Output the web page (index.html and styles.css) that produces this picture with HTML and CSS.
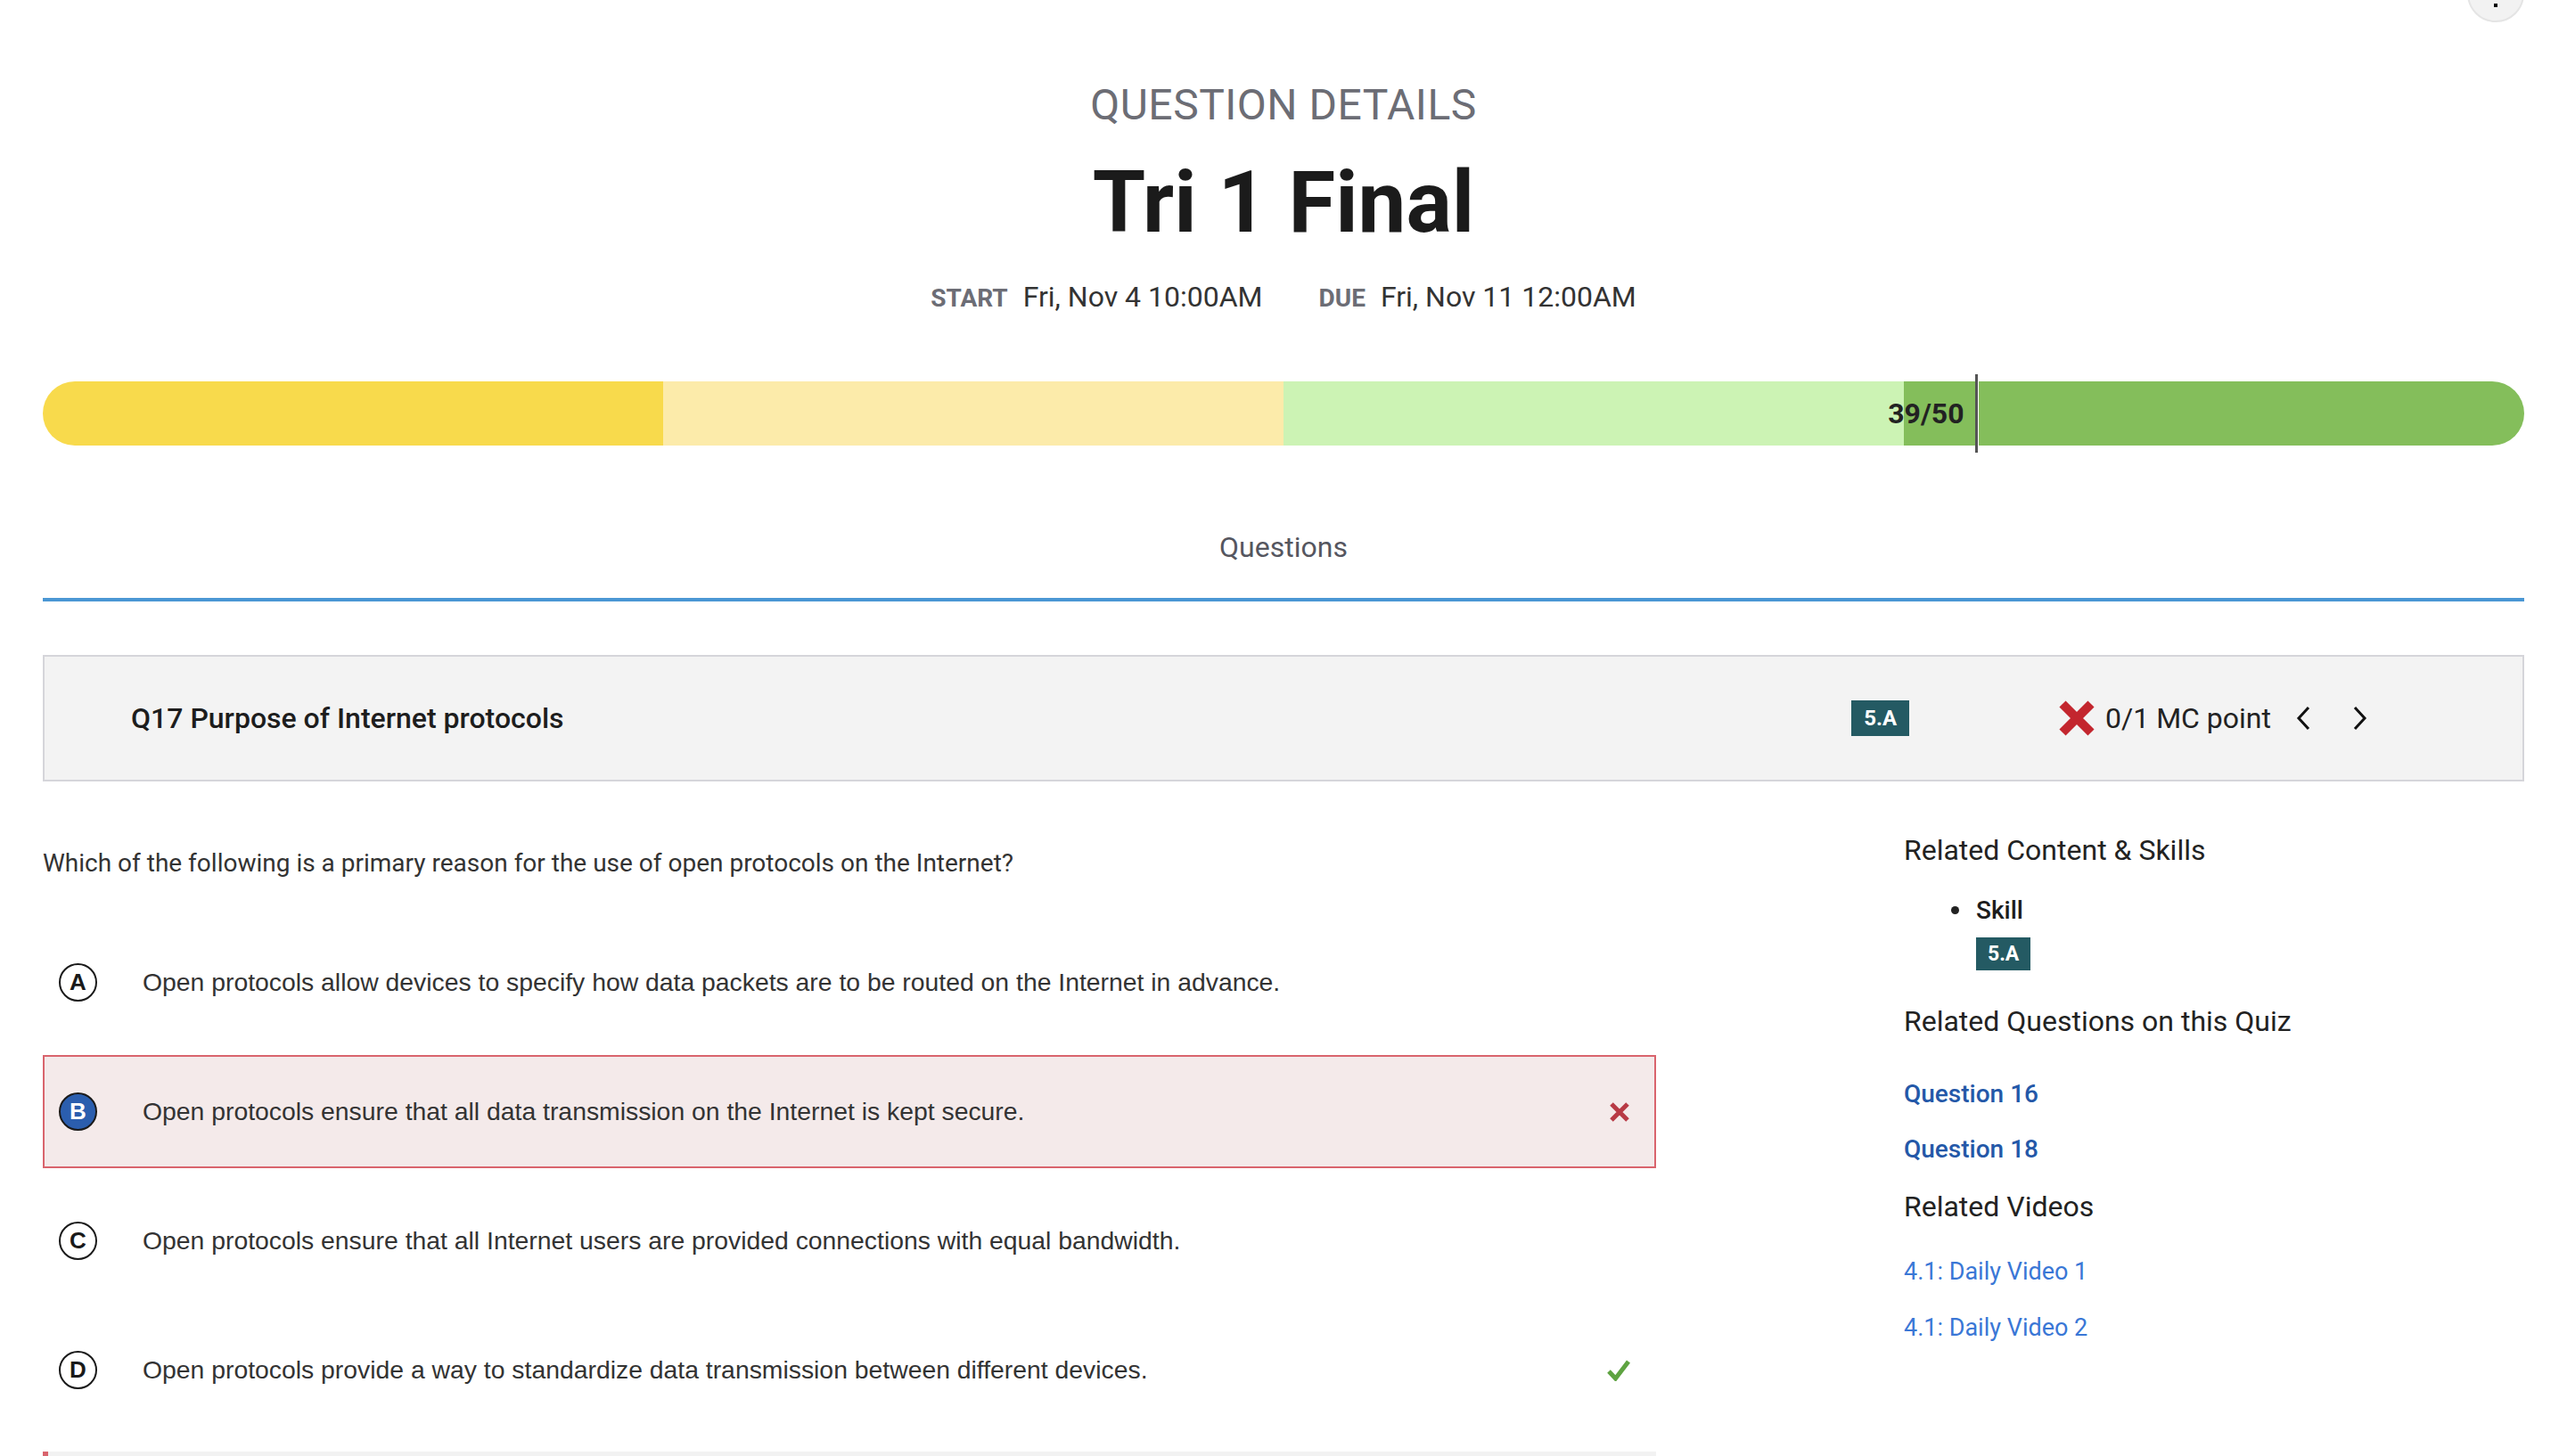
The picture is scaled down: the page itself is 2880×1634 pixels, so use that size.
FILE: index.html
```html
<!DOCTYPE html>
<html lang="en">
<head>
<meta charset="utf-8">
<title>Question Details - Tri 1 Final</title>
<link rel="stylesheet" href="styles.css">
</head>
<body>
<div class="page">
  <button class="menu-btn" aria-label="More options">
    <span class="dot"></span><span class="dot"></span><span class="dot"></span>
  </button>

  <header class="hero">
    <h2 class="eyebrow">QUESTION DETAILS</h2>
    <h1 class="title">Tri 1 Final</h1>
    <div class="dates">
      <div class="date"><span class="date-label">START</span><span class="date-value">Fri, Nov 4 10:00AM</span></div>
      <div class="date"><span class="date-label">DUE</span><span class="date-value">Fri, Nov 11 12:00AM</span></div>
    </div>
  </header>

  <div class="progress">
    <div class="track">
      <div class="seg seg-1"></div>
      <div class="seg seg-2"></div>
      <div class="seg seg-3"></div>
      <div class="seg seg-4"></div>
    </div>
    <div class="marker" style="left:78%"><span class="marker-label">39/50</span></div>
  </div>

  <nav class="tabs"><span class="tab">Questions</span></nav>

  <section class="qhead">
    <div class="qhead-title">Q17 Purpose of Internet protocols</div>
    <span class="badge">5.A</span>
    <svg class="big-x" width="42" height="42" viewBox="0 0 42 42"><path d="M5 5 L37 37 M37 5 L5 37" stroke="#c3262e" stroke-width="10" fill="none"/></svg>
    <span class="score">0/1 MC point</span>
    <svg class="chev chev-left" width="20" height="28" viewBox="0 0 20 28"><polyline points="16,2 5,14 16,26" fill="none" stroke="#111" stroke-width="3"/></svg>
    <svg class="chev chev-right" width="20" height="28" viewBox="0 0 20 28"><polyline points="4,2 15,14 4,26" fill="none" stroke="#111" stroke-width="3"/></svg>
  </section>

  <div class="content">
    <main class="main">
      <p class="prompt">Which of the following is a primary reason for the use of open protocols on the Internet?</p>
      <div class="options">
        <div class="opt">
          <span class="letter">A</span>
          <span class="opt-text">Open protocols allow devices to specify how data packets are to be routed on the Internet in advance.</span>
        </div>
        <div class="opt opt-wrong">
          <span class="letter letter-chosen">B</span>
          <span class="opt-text">Open protocols ensure that all data transmission on the Internet is kept secure.</span>
          <svg class="opt-icon" width="24" height="24" viewBox="0 0 24 24"><path d="M3 3 L21 21 M21 3 L3 21" stroke="#b83a45" stroke-width="5" fill="none"/></svg>
        </div>
        <div class="opt">
          <span class="letter">C</span>
          <span class="opt-text">Open protocols ensure that all Internet users are provided connections with equal bandwidth.</span>
        </div>
        <div class="opt">
          <span class="letter">D</span>
          <span class="opt-text">Open protocols provide a way to standardize data transmission between different devices.</span>
          <svg class="opt-icon" width="26" height="24" viewBox="0 0 26 24"><path d="M2 13 L9.5 21 L24 2" stroke="#5ea341" stroke-width="5" fill="none"/></svg>
        </div>
      </div>
      <div class="explanation"></div>
    </main>

    <aside class="side">
      <h3 class="side-h">Related Content &amp; Skills</h3>
      <ul class="skills">
        <li class="skill">
          <span class="bullet"></span>
          <span class="skill-name">Skill</span>
          <span class="badge badge-sm">5.A</span>
        </li>
      </ul>
      <h3 class="side-h side-h-q">Related Questions on this Quiz</h3>
      <a class="qlink qlink-first" href="#">Question 16</a>
      <a class="qlink" href="#">Question 18</a>
      <h3 class="side-h side-h-v">Related Videos</h3>
      <a class="vlink vlink-first" href="#">4.1: Daily Video 1</a>
      <a class="vlink" href="#">4.1: Daily Video 2</a>
    </aside>
  </div>
</div>
</body>
</html>
```
FILE: styles.css
```css
* { box-sizing: border-box; }
html, body { margin: 0; padding: 0; }
body {
  font-family: Roboto, "Noto Sans", "Liberation Sans", sans-serif;
  color: #222;
  background: #fff;
  height: 1634px;
  overflow: hidden;
}
.page { position: relative; padding: 0 48px; }

.menu-btn {
  position: absolute;
  top: -39px;
  right: 48px;
  width: 64px;
  height: 64px;
  border-radius: 50%;
  background: #f2f2f2;
  border: 2px solid #e4e4e4;
  padding: 0 0 15px;
  display: flex;
  flex-direction: column;
  align-items: center;
  justify-content: flex-end;
  gap: 8px;
}
.menu-btn .dot { width: 4px; height: 4px; background: #000; display: block; }

.hero { text-align: center; padding-top: 90px; }
.eyebrow {
  margin: 0;
  font-size: 48px;
  line-height: 56px;
  font-weight: 400;
  letter-spacing: 0.5px;
  color: #6c6d75;
}
.title {
  margin: 25px 0 0;
  font-size: 96px;
  line-height: 112px;
  font-weight: 700;
  color: #1b1b1b;
}
.dates {
  margin-top: 32px;
  display: flex;
  justify-content: center;
  gap: 63px;
}
.date { display: flex; align-items: baseline; gap: 17px; }
.date-label { font-size: 28px; font-weight: 700; color: #6c6d75; }
.date-value { font-size: 32px; line-height: 37px; color: #333; }

.progress { position: relative; margin-top: 76px; height: 72px; }
.track { display: flex; height: 100%; border-radius: 36px; overflow: hidden; }
.seg { flex: 1; }
.seg-1 { background: #f8da4c; }
.seg-2 { background: #fcebaa; }
.seg-3 { background: #ccf3b4; }
.seg-4 { background: #84be5b; }
.marker {
  position: absolute;
  top: -8px;
  bottom: -8px;
  width: 4px;
  margin-left: -4px;
  background: #555;
  border-right: 1px solid #fff;
}
.marker-label {
  position: absolute;
  right: calc(100% + 12px);
  top: 50%;
  transform: translateY(-50%);
  font-size: 32px;
  font-weight: 700;
  color: #222;
}

.tabs {
  margin-top: 96px;
  text-align: center;
  border-bottom: 4px solid #4a97d4;
}
.tab {
  display: inline-block;
  font-size: 32px;
  line-height: 37px;
  color: #55565f;
  padding-bottom: 38px;
}

.qhead {
  margin-top: 60px;
  height: 142px;
  border: 2px solid #d5d5da;
  background: #f3f3f3;
  display: flex;
  align-items: center;
  padding: 0 172px 0 97px;
}
.qhead-title { flex: 1; font-size: 32px; font-weight: 500; color: #1d1d1d; }
.badge {
  display: inline-block;
  background: #245a63;
  color: #fff;
  font-size: 24px;
  font-weight: 700;
  line-height: 40px;
  padding: 0 14px;
}
.big-x { margin-left: 167px; display: block; }
.score { margin-left: 11px; font-size: 32px; color: #222; }
.chev { display: block; }
.chev-left { margin-left: 26px; }
.chev-right { margin-left: 44px; }

.content {
  display: grid;
  grid-template-columns: 65fr 10fr 25fr;
  margin-top: 58px;
  align-items: start;
}
.main { grid-column: 1; padding-top: 17px; }
.side { grid-column: 3; }

.prompt {
  margin: 0 0 54px;
  font-size: 28px;
  line-height: 33px;
  color: #333;
}
.options { display: flex; flex-direction: column; gap: 18px; }
.opt {
  height: 127px;
  border: 2px solid transparent;
  display: flex;
  align-items: center;
  padding: 0 27px 0 16px;
}
.opt-wrong { border-color: #d9646d; background: #f4eaea; }
.letter {
  flex: 0 0 auto;
  width: 43px;
  height: 43px;
  border-radius: 50%;
  border: 2.5px solid #1a1a1a;
  display: flex;
  align-items: center;
  justify-content: center;
  font-family: "Liberation Sans", Arial, sans-serif;
  font-weight: 700;
  font-size: 26px;
  color: #1a1a1a;
  background: #fff;
}
.letter-chosen { background: #2b5eae; color: #fff; border-width: 2px; }
.opt-text {
  margin-left: 51px;
  font-family: "Liberation Sans", Arial, sans-serif;
  font-size: 28.35px;
  color: #333;
}
.opt-icon { margin-left: auto; display: block; }
.explanation {
  margin-top: 28px;
  height: 160px;
  background: #f2f2f2;
  border-left: 6px solid #d9646d;
}

.side-h {
  margin: 0;
  font-size: 32px;
  line-height: 38px;
  font-weight: 400;
  color: #222;
}
.skills { list-style: none; margin: 32px 0 0; padding: 0 0 0 53px; }
.skill {
  display: grid;
  grid-template-columns: 9px auto;
  column-gap: 19px;
  align-items: center;
  justify-items: start;
}
.bullet { width: 9px; height: 9px; border-radius: 50%; background: #222; }
.skill-name { font-size: 28px; line-height: 33px; font-weight: 500; color: #1d1d1d; }
.badge-sm {
  grid-column: 2;
  margin-top: 14px;
  font-size: 23px;
  line-height: 37px;
  padding: 0 13px;
}
.side-h-q { margin-top: 38px; }
.side-h-v { margin-top: 29px; }
.qlink {
  display: block;
  margin-top: 29px;
  font-size: 28px;
  line-height: 33px;
  font-weight: 500;
  color: #2458a8;
  text-decoration: none;
}
.qlink-first { margin-top: 46px; }
.vlink {
  display: block;
  margin-top: 30px;
  font-size: 27px;
  line-height: 33px;
  color: #3a77d6;
  text-decoration: none;
}
.vlink-first { margin-top: 38px; }
```
